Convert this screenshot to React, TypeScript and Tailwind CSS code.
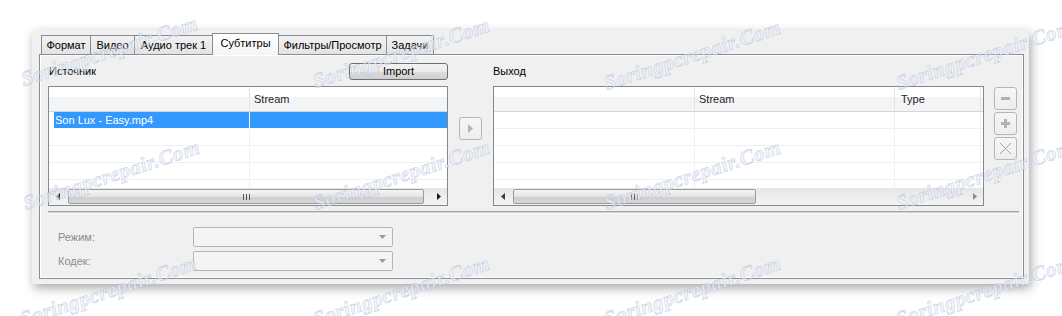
import React from "react";

const FONT = "font-['Liberation_Sans',Arial,sans-serif]";

const tabs = [
  { label: "Формат", w: "w-[50px]", active: false },
  { label: "Видео", w: "w-[45px]", active: false },
  { label: "Аудио трек 1", w: "w-[79px]", active: false },
  { label: "Субтитры", w: "w-[67px]", active: true },
  { label: "Фильтры/Просмотр", w: "w-[109px]", active: false },
  { label: "Задачи", w: "w-[48px]", active: false },
];

const marks = [
  "left-[25px] top-[68px]",
  "left-[317px] top-[70px]",
  "left-[608px] top-[72px]",
  "left-[900px] top-[72px]",
  "left-[27px] top-[192px]",
  "left-[317px] top-[192px]",
  "left-[608px] top-[192px]",
  "left-[900px] top-[192px]",
  "left-[24px] top-[308px]",
  "left-[317px] top-[308px]",
  "left-[608px] top-[308px]",
  "left-[900px] top-[308px]",
];

function Grip() {
  return (
    <div className="flex gap-[2px] h-[6px]">
      <div className="w-px bg-[#5a5a5a]" />
      <div className="w-px bg-[#5a5a5a]" />
      <div className="w-px bg-[#5a5a5a]" />
    </div>
  );
}

function Scrollbar({ thumb, grey }: { thumb: string; grey?: boolean }) {
  return (
    <div className="h-[17px] flex bg-[linear-gradient(#e6e6e6,#f4f4f4)] shrink-0">
      <div className="w-[17px] flex items-center justify-center">
        <svg width="4" height="7" viewBox="0 0 4 7">
          <path d="M4 0 L0 3.5 L4 7 Z" fill={grey ? "#3c3c3c" : "#1a1a1a"} />
        </svg>
      </div>
      <div className="flex-1 relative">
        <div
          className={`absolute top-px ml-[2px] h-[15px] ${thumb} rounded-[2px] border border-[#9a9a9a] bg-[linear-gradient(#f5f5f5,#e4e4e4_50%,#cfcfcf_51%,#d6d6d6)] flex items-center justify-center`}
        >
          <Grip />
        </div>
      </div>
      <div className="w-[17px] flex items-center justify-center">
        <svg width="4" height="7" viewBox="0 0 4 7">
          <path d="M0 0 L4 3.5 L0 7 Z" fill={grey ? "#8a8a8a" : "#1a1a1a"} />
        </svg>
      </div>
    </div>
  );
}

function Row({ cols }: { cols: string[] }) {
  return (
    <div className="h-[17px] flex border-b border-[#f0f0f0] shrink-0">
      {cols.map((c, i) => (
        <div key={i} className={`${c} h-full border-r border-[#f0f0f0]`} />
      ))}
    </div>
  );
}

function LeftTable() {
  return (
    <div className="w-[400px] h-[120px] border border-[#828790] bg-white flex flex-col overflow-hidden">
      <div className="h-[25px] flex border-b border-[#d5d5d5] bg-[linear-gradient(#ffffff_0%,#ffffff_42%,#f3f4f6_43%,#f3f4f6_100%)] shrink-0 text-[11px] text-[#1e1e1e]">
        <div className="w-[201px] border-r border-[#e2e4e8]" />
        <div className="flex-1 pl-[4px] flex items-center">Stream</div>
      </div>
      <div className="flex-1 overflow-hidden flex flex-col">
        <div className="h-[17px] flex border-b border-white shrink-0">
          <div className="w-[201px] pl-[5px] border-r border-white">
            <div className="h-full bg-[#3399ff] text-white text-[11px] flex items-center pl-px">
              Son Lux - Easy.mp4
            </div>
          </div>
          <div className="flex-1 bg-[#3399ff]" />
        </div>
        <Row cols={["w-[201px]"]} />
        <Row cols={["w-[201px]"]} />
        <Row cols={["w-[201px]"]} />
        <Row cols={["w-[201px]"]} />
      </div>
      <Scrollbar thumb="w-[356px]" />
    </div>
  );
}

function RightTable() {
  return (
    <div className="w-[491px] h-[120px] border border-[#828790] bg-white flex flex-col overflow-hidden">
      <div className="h-[25px] flex border-b border-[#d5d5d5] bg-[linear-gradient(#ffffff_0%,#ffffff_42%,#f3f4f6_43%,#f3f4f6_100%)] shrink-0 text-[11px] text-[#1e1e1e]">
        <div className="w-[201px] border-r border-[#e2e4e8]" />
        <div className="w-[200px] border-r border-[#e2e4e8] pl-[4px] flex items-center">Stream</div>
        <div className="w-[86px] border-r border-[#e2e4e8] pl-[6px] flex items-center">Type</div>
      </div>
      <div className="flex-1 overflow-hidden flex flex-col">
        <Row cols={["w-[201px]", "w-[200px]", "w-[86px]"]} />
        <Row cols={["w-[201px]", "w-[200px]", "w-[86px]"]} />
        <Row cols={["w-[201px]", "w-[200px]", "w-[86px]"]} />
        <Row cols={["w-[201px]", "w-[200px]", "w-[86px]"]} />
        <Row cols={["w-[201px]", "w-[200px]", "w-[86px]"]} />
      </div>
      <Scrollbar thumb="w-[243px]" grey />
    </div>
  );
}

function SmallButton({ children }: { children: React.ReactNode }) {
  return (
    <div className="w-[23px] h-[23px] rounded-[3px] border border-[#b4b7ba] bg-[linear-gradient(#f6f6f6,#eeeeee)] flex items-center justify-center">
      {children}
    </div>
  );
}

function Dropdown() {
  return (
    <div className="w-[200px] h-[20px] rounded-[2px] border border-[#b6b6b6] bg-[#f4f4f4] flex items-center justify-end pr-[6px]">
      <svg width="7" height="4" viewBox="0 0 7 4">
        <path d="M0 0 L7 0 L3.5 4 Z" fill="#9a9a9a" />
      </svg>
    </div>
  );
}

export default function App() {
  return (
    <div className={`relative w-[1062px] h-[316px] bg-white overflow-hidden ${FONT}`}>
      <div className="pl-[32px] pt-[30px]">
        <div className="w-[997px] h-[254px] bg-[#f0f0f0] shadow-[2px_4px_10px_rgba(0,0,0,0.35)] pl-[7px] pt-[3px]">
          {/* Tab bar */}
          <div className="flex items-end h-[21px] pl-[2px] text-[11px] text-black">
            {tabs.map((t, i) =>
              t.active ? (
                <div
                  key={i}
                  className={`${t.w} h-[22px] -mb-px -ml-px relative z-10 border border-b-0 border-[#898c95] bg-[linear-gradient(#ffffff,#f4f4f4)] flex items-center justify-center pb-[2px]`}
                >
                  {t.label}
                </div>
              ) : (
                <div
                  key={i}
                  className={`${t.w} h-[19px] ${i > 0 ? "-ml-px" : ""} border border-b-0 border-[#898c95] bg-[linear-gradient(#f2f2f2,#e3e3e3)] flex items-center justify-center`}
                >
                  {t.label}
                </div>
              )
            )}
          </div>
          {/* Panel */}
          <div className="w-[985px] h-[225px] border border-[#898c95] bg-[#f0f0f0] shadow-[inset_1px_1px_0_#ffffff,inset_-1px_-1px_0_#ffffff] pl-[8px] pt-[7px] text-[11px] text-black">
            <div className="flex items-start">
              <div className="w-[400px] flex flex-col">
                <div className="h-[18px] flex items-center justify-between">
                  <span className="pl-px">Источник</span>
                  <div className="w-[99px] h-[17px] rounded-[3px] border border-[#707070] bg-[linear-gradient(#f2f2f2,#ebebeb_50%,#dddddd_51%,#cfcfcf)] flex items-center justify-center">
                    Import
                  </div>
                </div>
                <div className="mt-[6px]">
                  <LeftTable />
                </div>
              </div>
              <div className="ml-[11px] mt-[55px]">
                <div className="w-[23px] h-[23px] rounded-[3px] border border-[#b4b7ba] bg-[linear-gradient(#f6f6f6,#eeeeee)] flex items-center justify-center">
                  <svg width="5" height="9" viewBox="0 0 5 9">
                    <path d="M0 0 L5 4.5 L0 9 Z" fill="#a9b6c3" />
                  </svg>
                </div>
              </div>
              <div className="ml-[11px] w-[491px] flex flex-col">
                <div className="h-[18px] flex items-center">
                  <span>Выход</span>
                </div>
                <div className="mt-[6px]">
                  <RightTable />
                </div>
              </div>
              <div className="ml-[10px] mt-[25px] flex flex-col gap-[2px]">
                <SmallButton>
                  <div className="w-[9px] h-[3px] bg-[#b0b3b6]" />
                </SmallButton>
                <SmallButton>
                  <svg width="9" height="9" viewBox="0 0 9 9">
                    <path d="M3 0 H6 V3 H9 V6 H6 V9 H3 V6 H0 V3 H3 Z" fill="#b0b3b6" />
                  </svg>
                </SmallButton>
                <SmallButton>
                  <svg width="13" height="13" viewBox="0 0 13 13">
                    <path d="M1 1 L12 12 M12 1 L1 12" stroke="#9ea2a6" strokeWidth="1" />
                  </svg>
                </SmallButton>
              </div>
            </div>
            {/* Separator */}
            <div className="mt-[5px] w-[971px] h-[3px] border-t border-[#a3a6a3] bg-[#cfd3cf] border-b border-b-[#f8f8f8]" />
            {/* Form */}
            <div className="mt-[13px] flex flex-col gap-[4px] text-[#8c8c8c]">
              <div className="flex items-center">
                <span className="w-[135px] pl-[10px] box-content">Режим:</span>
                <Dropdown />
              </div>
              <div className="flex items-center">
                <span className="w-[135px] pl-[10px] box-content">Кодек:</span>
                <Dropdown />
              </div>
            </div>
          </div>
        </div>
      </div>
      {/* Watermarks */}
      <div className="absolute inset-0 pointer-events-none">
        {marks.map((m, i) => (
          <div
            key={i}
            className={`absolute ${m} h-[22px] leading-[22px] whitespace-nowrap origin-[0_100%] rotate-[-18deg] font-['Liberation_Serif',serif] italic font-bold text-[21px] tracking-[0.5px] text-[#eef1f8]/60 [-webkit-text-stroke:0.6px_rgba(160,176,210,0.55)]`}
          >
            Soringpcrepair.Com
          </div>
        ))}
      </div>
    </div>
  );
}
